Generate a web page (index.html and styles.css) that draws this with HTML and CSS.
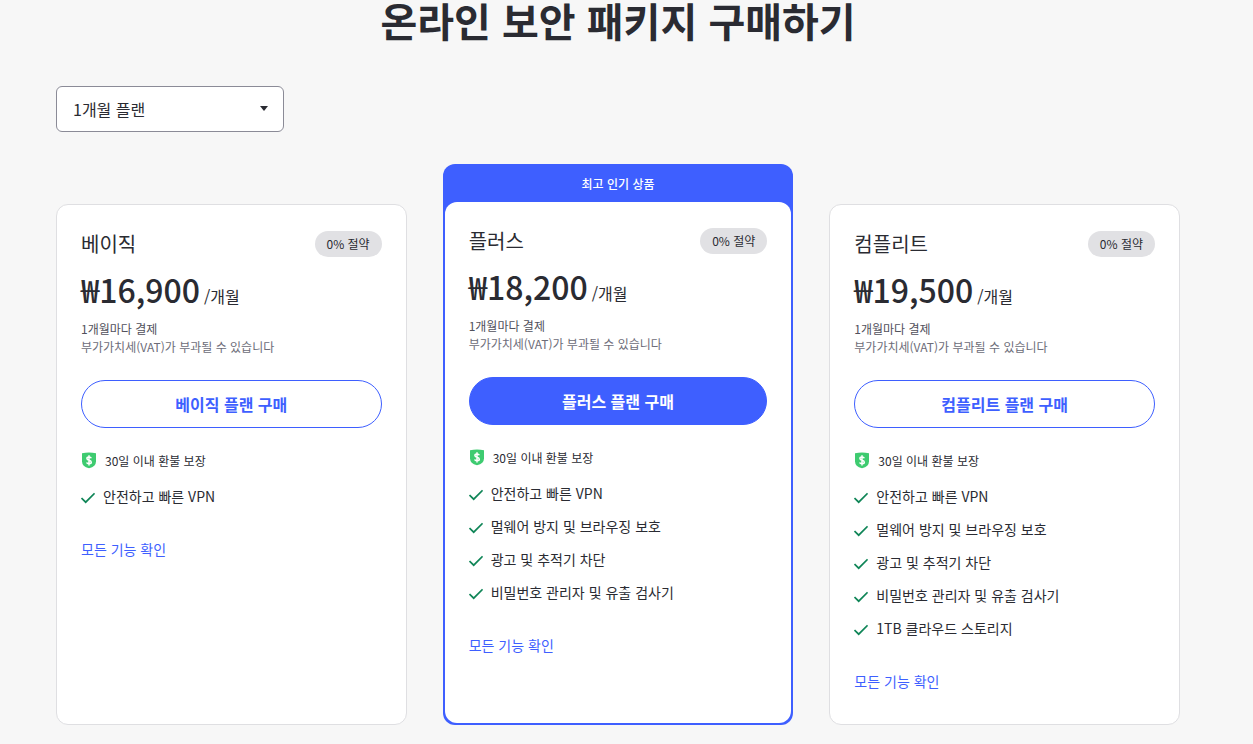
FILE: index.html
```
<!DOCTYPE html>
<html lang="ko">
<head>
  <meta charset="UTF-8">
  <meta name="viewport" content="width=device-width, initial-scale=1.0">
  <title>온라인 보안 패키지 구매하기</title>
  <link rel="stylesheet" href="styles.css">
</head>
<body>

  <svg class="sprite" aria-hidden="true">
    <symbol id="check" viewBox="0 0 14 16">
      <path d="M0.5 9 L4.700 13.200 L13.600 4.300" fill="none" stroke="#0f8557" stroke-width="1.700"/>
    </symbol>
    <symbol id="shield" viewBox="0 0 16 18">
      <path d="M1 1.200 Q8 -0.400 15 1.200 V9.500 Q15 14.500 8 16.300 Q1 14.500 1 9.500 Z" fill="#3ecb70"/>
      <path d="M10.300 6.200 Q9.800 5 8 5 Q5.900 5 5.900 6.600 Q5.900 7.900 8 8.300 Q10.300 8.700 10.300 10.200 Q10.300 11.700 8 11.700 Q6.100 11.700 5.600 10.400 M8 3.300 V13.400" fill="none" stroke="#fff" stroke-width="1.500"/>
    </symbol>
  </svg>

  <main class="container">
    <h1>온라인 보안 패키지 구매하기</h1>

    <div class="select-box">
      <select class="plan-select" aria-label="플랜 기간">
        <option>1개월 플랜</option>
      </select>
      <svg class="arrow" viewBox="0 0 8 5" aria-hidden="true"><path d="M0 0 H8 L4 5 Z" fill="#2a2b32"/></svg>
    </div>

    <div class="plans">
      <section class="plan">
        <div class="card">
          <div class="card-top">
            <h2>베이직</h2>
            <span class="badge">0% 절약</span>
          </div>
          <p class="price"><strong>₩16,900</strong> <span>/개월</span></p>
          <p class="billed">1개월마다 결제</p>
          <p class="vat">부가가치세(VAT)가 부과될 수 있습니다</p>
          <button class="buy">베이직 플랜 구매</button>
          <p class="refund"><svg><use href="#shield"/></svg>30일 이내 환불 보장</p>
          <ul class="features">
            <li><svg><use href="#check"/></svg>안전하고 빠른 VPN</li>
          </ul>
          <a class="all" href="#">모든 기능 확인</a>
        </div>
      </section>

      <section class="plan popular">
        <p class="ribbon">최고 인기 상품</p>
        <div class="card">
          <div class="card-top">
            <h2>플러스</h2>
            <span class="badge">0% 절약</span>
          </div>
          <p class="price"><strong>₩18,200</strong> <span>/개월</span></p>
          <p class="billed">1개월마다 결제</p>
          <p class="vat">부가가치세(VAT)가 부과될 수 있습니다</p>
          <button class="buy">플러스 플랜 구매</button>
          <p class="refund"><svg><use href="#shield"/></svg>30일 이내 환불 보장</p>
          <ul class="features">
            <li><svg><use href="#check"/></svg>안전하고 빠른 VPN</li>
            <li><svg><use href="#check"/></svg>멀웨어 방지 및 브라우징 보호</li>
            <li><svg><use href="#check"/></svg>광고 및 추적기 차단</li>
            <li><svg><use href="#check"/></svg>비밀번호 관리자 및 유출 검사기</li>
          </ul>
          <a class="all" href="#">모든 기능 확인</a>
        </div>
      </section>

      <section class="plan">
        <div class="card">
          <div class="card-top">
            <h2>컴플리트</h2>
            <span class="badge">0% 절약</span>
          </div>
          <p class="price"><strong>₩19,500</strong> <span>/개월</span></p>
          <p class="billed">1개월마다 결제</p>
          <p class="vat">부가가치세(VAT)가 부과될 수 있습니다</p>
          <button class="buy">컴플리트 플랜 구매</button>
          <p class="refund"><svg><use href="#shield"/></svg>30일 이내 환불 보장</p>
          <ul class="features">
            <li><svg><use href="#check"/></svg>안전하고 빠른 VPN</li>
            <li><svg><use href="#check"/></svg>멀웨어 방지 및 브라우징 보호</li>
            <li><svg><use href="#check"/></svg>광고 및 추적기 차단</li>
            <li><svg><use href="#check"/></svg>비밀번호 관리자 및 유출 검사기</li>
            <li><svg><use href="#check"/></svg>1TB 클라우드 스토리지</li>
          </ul>
          <a class="all" href="#">모든 기능 확인</a>
        </div>
      </section>
    </div>
  </main>

</body>
</html>
```
FILE: styles.css
```
* {
  box-sizing: border-box;
}

body {
  margin: 0;
  background-color: #f7f7f7;
  color: #2a2b32;
  font-family: "Noto Sans CJK KR", sans-serif;
  font-size: 14px;
  line-height: 21px;
}

h1, h2, p, ul {
  margin: 0;
  padding: 0;
}

.sprite {
  display: none;
}

.container {
  padding: 0 73px 19px 56px;
}

h1 {
  font-size: 40px;
  line-height: 40px;
  font-weight: 700;
  text-align: center;
}

.select-box {
  position: relative;
  width: 228px;
  margin: 46px 0 32px;
}

.plan-select {
  display: block;
  appearance: none;
  width: 100%;
  height: 46px;
  padding: 0 16px;
  border: 1px solid #8b8b97;
  border-radius: 6px;
  background-color: #fff;
  color: #2a2b32;
  font-family: inherit;
  font-size: 16px;
}

.arrow {
  position: absolute;
  top: 20px;
  right: 16px;
  width: 8px;
  height: 5px;
  pointer-events: none;
}

.plans {
  display: grid;
  grid-template-columns: repeat(3, 1fr);
  gap: 36px;
}

.plan {
  display: flex;
  flex-direction: column;
  padding-top: 40px;
}

.card {
  flex: 1;
  padding: 24px 24px 32px;
  border: 1px solid #dfdfe2;
  border-radius: 12px;
  background-color: #fff;
}

.popular {
  padding: 0 2px 2px;
  border-radius: 12px;
  background-color: #3e5fff;
}

.popular .card {
  border: none;
}

.ribbon {
  height: 38px;
  color: #fff;
  font-size: 12px;
  font-weight: 500;
  line-height: 40px;
  text-align: center;
}

.card-top {
  display: flex;
  align-items: center;
  justify-content: space-between;
}

h2 {
  font-size: 20px;
  line-height: 30px;
  font-weight: 400;
}

.badge {
  padding: 4px 12px;
  border-radius: 13px;
  background-color: #e1e1e4;
  font-size: 12px;
  line-height: 18px;
}

.price {
  display: flex;
  align-items: baseline;
  gap: 4px;
  margin: 8px 0 9px;
  font-size: 16px;
  line-height: 24px;
}

.price strong {
  font-size: 32px;
  line-height: 44px;
  font-weight: 500;
}

.billed, .vat {
  font-size: 12px;
  line-height: 18px;
}

.billed {
  color: #51515c;
}

.vat {
  color: #6c6c78;
}

.buy {
  display: block;
  width: 100%;
  height: 48px;
  margin: 24px 0;
  border: 1px solid #3e5fff;
  border-radius: 24px;
  background-color: #fff;
  color: #3e5fff;
  font-family: inherit;
  font-size: 16px;
  font-weight: 700;
  cursor: pointer;
}

.popular .buy {
  background-color: #3e5fff;
  color: #fff;
}

.refund {
  display: flex;
  align-items: center;
  gap: 8px;
  margin-bottom: 16px;
  font-size: 12px;
  line-height: 18px;
}

.refund svg {
  width: 16px;
  height: 18px;
}

.features {
  display: flex;
  flex-direction: column;
  gap: 12px;
  margin-bottom: 32px;
  list-style: none;
}

.features li {
  display: flex;
  align-items: center;
  gap: 8px;
}

.features svg {
  width: 14px;
  height: 16px;
}

.all {
  display: block;
  color: #3e5fff;
  text-decoration: none;
}
```
